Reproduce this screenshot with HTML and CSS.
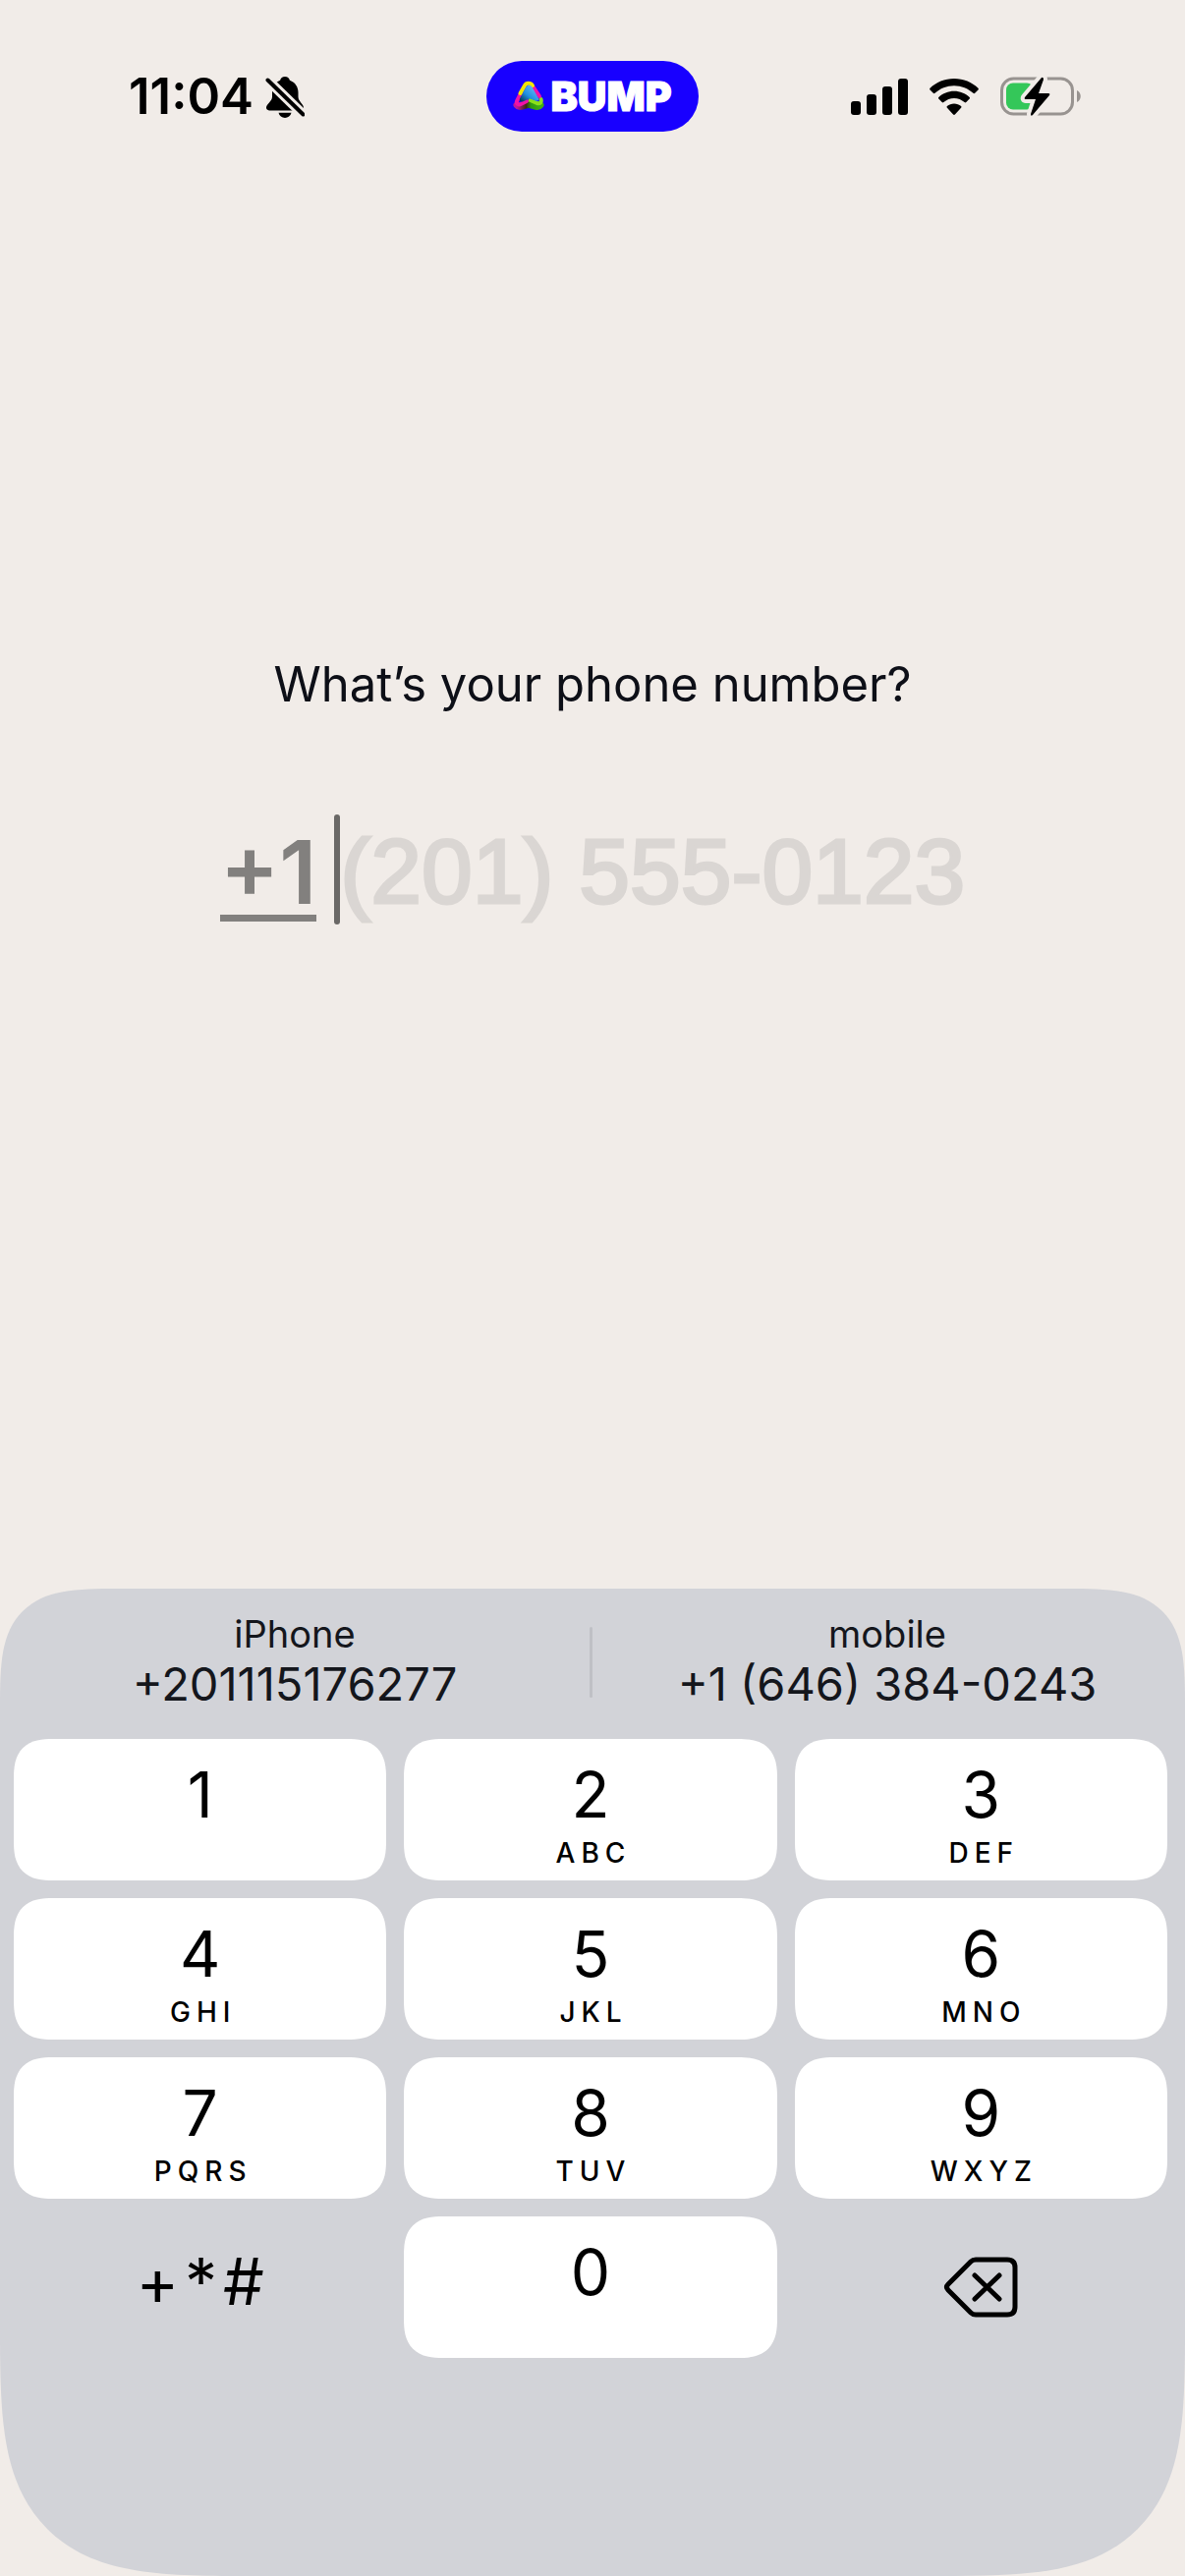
FILE: index.html
```html
<!DOCTYPE html>
<html lang="en">
<head>
<meta charset="utf-8">
<meta name="viewport" content="width=device-width, initial-scale=1">
<title>Bump – phone number</title>
<link rel="stylesheet" href="styles.css">
</head>
<body>
<div class="screen">
  <header class="status">
    <div class="status-left">
      <time class="clock">11:04</time>
      <svg class="bell" viewBox="0 0 40 44" width="40" height="44" aria-label="Silent mode">
        <path d="M20 2c-2.600 0-4.400 1.600-4.900 3.800-5.600 2-8.100 7-8.100 12.200v4.500c0 4.500-6 7.600-6 11.100 0 1.800 1.200 2.800 3 2.800h32c1.800 0 3-1 3-2.800 0-3.500-5.500-6.600-5.500-11.100V18c0-5.200-3-10.200-8.600-12.200C24.400 3.600 22.600 2 20 2z"/>
        <path d="M13.500 38.800h13c-.8 3.200-3.400 5.200-6.500 5.200s-5.700-2-6.500-5.200z"/>
        <path class="bell-gap" d="M-1 2l42 41"/>
        <path class="bell-slash" d="M2.500 5.500l36 35"/>
      </svg>
    </div>
    <div class="island">
      <svg class="logo" viewBox="0 0 32 32" width="32" height="32" aria-hidden="true">
        <defs>
          <linearGradient id="core" x1="0" y1="1" x2="1" y2="0">
            <stop offset="0" stop-color="#06263f"/><stop offset=".4" stop-color="#1f8fe0"/><stop offset="1" stop-color="#7fc4ff"/>
          </linearGradient>
          <linearGradient id="foot" x1="0" y1="0" x2="1" y2="0">
            <stop offset="0" stop-color="#c0189a"/><stop offset=".4" stop-color="#3a2a10"/><stop offset=".6" stop-color="#2f9a10"/><stop offset="1" stop-color="#3fae12"/>
          </linearGradient>
        </defs>
        <path class="logo-foot" d="M4 25c3 4 7-.5 12-.5s9 4.500 12 .5"/>
        <path class="logo-green" d="M28.500 19c1 3-1 5-4 4l-7-3"/>
        <path class="logo-magenta" d="M8 13L4 21c-1 2.500 2 4 4 3l6-3M21 7l6 9"/>
        <path class="logo-yellow" d="M7.500 13L12 5c1.500-3 6-3 8 0"/>
        <path fill="url(#core)" d="M13.500 6.500c1.500-2.500 4.500-2.500 6 0l6.500 11.500c.8 2-1 3.200-3 2.400l-6-2.200-6.500 3c-2.500 1-4.500-.7-3.500-3z"/>
      </svg>
      <span class="brand">BUMP</span>
    </div>
    <div class="status-right">
      <svg viewBox="0 0 58 38" width="58" height="38" aria-label="Signal">
        <rect x="0" y="24" width="10" height="14" rx="3"/><rect x="16" y="17" width="10" height="21" rx="3"/>
        <rect x="32" y="9" width="10" height="29" rx="3"/><rect x="48" y="1" width="10" height="37" rx="3"/>
      </svg>
      <svg viewBox="0 0 50 38" width="50" height="38" aria-label="Wi-Fi">
        <path d="M25 1C15.500 1 6.800 4.700.5 10.700c-.5.500-.5 1.200 0 1.700l3.300 3.400c.5.500 1.200.5 1.700 0C10.700 11 17.500 8.200 25 8.200S39.300 11 44.500 15.800c.5.500 1.200.5 1.700 0l3.300-3.400c.5-.5.500-1.200 0-1.700C43.200 4.700 34.500 1 25 1z"/>
        <path d="M25 13.800c-6 0-11.500 2.300-15.700 6.100-.5.500-.5 1.200 0 1.700l3.400 3.500c.5.500 1.100.5 1.700 0C17.300 22.600 21 21 25 21s7.700 1.600 10.600 4.100c.6.500 1.200.5 1.700 0l3.400-3.500c.5-.5.500-1.200 0-1.700-4.200-3.800-9.700-6.100-15.700-6.100z"/>
        <path d="M25 26.500c-2.700 0-5.200 1-7.100 2.600-.5.500-.5 1.200 0 1.700l6.200 6.700c.5.500 1.300.5 1.800 0l6.200-6.700c.5-.5.500-1.200 0-1.700-1.900-1.600-4.400-2.600-7.100-2.600z"/>
      </svg>
      <svg viewBox="0 0 82 42" width="82" height="42" aria-label="Battery charging">
        <rect class="cell" x="1.500" y="3" width="72" height="36" rx="12"/>
        <path class="nub" d="M78 15c5 2 5 10 0 12z"/>
        <rect class="charge" x="6" y="7.500" width="28" height="27" rx="7"/>
        <path class="bolt-gap" d="M42 2L25 22q-1 2 1 2h10l-5 15q0 3 2 1l17-20q1-2-1-2H39l5-14q0-3-2-2z"/>
        <path d="M42 2L25 22q-1 2 1 2h10l-5 15q0 3 2 1l17-20q1-2-1-2H39l5-14q0-3-2-2z"/>
      </svg>
    </div>
  </header>

  <main class="form">
    <label class="question" for="phone">What’s your phone number?</label>
    <div class="entry">
      <button class="code" type="button" aria-label="Country code +1">+1</button>
      <div class="field">
        <span class="caret"></span>
        <input class="phone" id="phone" type="tel" placeholder="(201) 555-0123">
      </div>
    </div>
  </main>

  <section class="keyboard" aria-label="Keypad">
    <div class="suggestions">
      <button class="suggestion" type="button"><span class="kind">iPhone</span><span class="number">+201115176277</span></button>
      <span class="divider"></span>
      <button class="suggestion" type="button"><span class="kind">mobile</span><span class="number">+1 (646) 384-0243</span></button>
    </div>
    <div class="keys">
      <button class="key" type="button"><span class="digit">1</span></button>
      <button class="key" type="button"><span class="digit">2</span><span class="letters">ABC</span></button>
      <button class="key" type="button"><span class="digit">3</span><span class="letters">DEF</span></button>
      <button class="key" type="button"><span class="digit">4</span><span class="letters">GHI</span></button>
      <button class="key" type="button"><span class="digit">5</span><span class="letters">JKL</span></button>
      <button class="key" type="button"><span class="digit">6</span><span class="letters">MNO</span></button>
      <button class="key" type="button"><span class="digit">7</span><span class="letters">PQRS</span></button>
      <button class="key" type="button"><span class="digit">8</span><span class="letters">TUV</span></button>
      <button class="key" type="button"><span class="digit">9</span><span class="letters">WXYZ</span></button>
      <button class="key key-plain" type="button"><span class="symbols">+*#</span></button>
      <button class="key" type="button"><span class="digit">0</span></button>
      <button class="key key-plain" type="button" aria-label="Delete">
        <svg class="delete" viewBox="0 0 76 62" width="76" height="62">
          <path d="M33 3h32q8 0 8 8v40q0 8-8 8H33q-3 0-5-2L5 34q-3-3 0-6L28 5q2-2 5-2z"/>
          <path d="M32 19l25 24M57 19L32 43"/>
        </svg>
      </button>
    </div>
  </section>
</div>
</body>
</html>
```
FILE: styles.css
```css
* { box-sizing: border-box; }
body {
  margin: 0;
  background: #f1ece8;
  color: #000;
  font-family: Inter, "Liberation Sans", sans-serif;
}
button {
  margin: 0;
  padding: 0;
  border: 0;
  background: none;
  color: inherit;
  font: inherit;
}
svg { display: block; flex: none; }

.screen {
  display: flex;
  flex-direction: column;
  min-height: 100vh;
}

.status {
  display: grid;
  grid-template-columns: 1fr auto 1fr;
  align-items: center;
  padding: 62px 106px 0 131px;
}
.status-left, .status-right {
  display: flex;
  align-items: center;
}
.status-left { gap: 12px; }
.status-right { justify-content: flex-end; gap: 22px; }
.clock {
  font-size: 51px;
  line-height: 60px;
  font-weight: 600;
}
.bell-gap { stroke: #f1ece8; stroke-width: 10; }
.bell-slash { stroke: #000; stroke-width: 4; stroke-linecap: round; }
.island {
  display: flex;
  align-items: center;
  justify-content: center;
  gap: 6px;
  width: 216px;
  height: 72px;
  margin-left: -25px;
  border-radius: 36px;
  background: #1800ff;
}
.brand {
  color: #fff;
  font-size: 41px;
  line-height: 48px;
  font-weight: 900;
  -webkit-text-stroke: 1px #fff;
}
.logo path { stroke-linecap: round; stroke-linejoin: round; }
.logo-foot { fill: none; stroke: url(#foot); stroke-width: 7; }
.logo-magenta { fill: none; stroke: #f012a8; stroke-width: 4; }
.logo-yellow { fill: none; stroke: #f2e600; stroke-width: 4; }
.logo-green { fill: none; stroke: #8be01a; stroke-width: 4; }
.cell { fill: none; stroke: #989390; stroke-width: 3; }
.nub { fill: #989390; }
.charge { fill: #34c759; }
.bolt-gap { fill: #f1ece8; stroke: #f1ece8; stroke-width: 8; stroke-linejoin: round; }

.form {
  display: flex;
  flex: 1;
  flex-direction: column;
  align-items: center;
  gap: 102px;
  padding-top: 533px;
}
.question {
  color: #0d0f17;
  font-size: 49px;
  line-height: 60px;
}
.entry {
  display: flex;
  align-items: flex-start;
  gap: 18px;
}
.code {
  height: 109px;
  border-bottom: 7px solid #82807e;
  color: #82807e;
  font-size: 90px;
  font-weight: 600;
  line-height: 118px;
}
.field { display: flex; }
.caret {
  width: 6px;
  height: 112px;
  border-radius: 3px;
  background: #6a6866;
}
.phone {
  field-sizing: content;
  height: 116px;
  padding: 0;
  border: 0;
  outline: 0;
  background: none;
  color: #0d0f17;
  font-family: "Liberation Sans", Arial, sans-serif;
  font-size: 93px;
  line-height: 116px;
}
.phone::placeholder {
  color: #dad6d3;
  opacity: 1;
  -webkit-text-stroke: 3px #dad6d3;
}

.keyboard {
  padding-bottom: 222px;
  border-radius: 80px 80px 166px 166px;
  background: #d2d3d8;
}
.suggestions {
  display: grid;
  grid-template-columns: 1fr 3px 1fr;
  align-items: center;
  height: 153px;
  padding: 0 3px 3px 0;
}
.suggestion {
  display: flex;
  flex-direction: column;
  align-items: center;
  padding-bottom: 5px;
  color: #14161c;
}
.kind { font-size: 38px; line-height: 48px; }
.number { font-size: 47px; line-height: 54px; }
.divider {
  height: 72px;
  border-radius: 2px;
  background: #bfc0c5;
}
.keys {
  display: grid;
  grid-template-columns: repeat(3, 1fr);
  gap: 18px;
  padding: 0 18px 0 14px;
}
.key {
  display: flex;
  flex-direction: column;
  align-items: center;
  height: 144px;
  padding-top: 20px;
  border-radius: 32px;
  background: #fff;
}
.key-plain {
  justify-content: center;
  padding-top: 0;
  background: none;
}
.digit { font-size: 64px; line-height: 74px; }
.letters {
  padding-left: 6px;
  font-size: 28px;
  line-height: 44px;
  font-weight: 500;
  letter-spacing: 6px;
}
.symbols {
  padding: 0 0 12px 6px;
  font-size: 66px;
  line-height: 74px;
  letter-spacing: 6px;
}
.delete path {
  fill: none;
  stroke: #000;
  stroke-width: 5;
  stroke-linecap: round;
  stroke-linejoin: round;
}

/* Continuous-curvature corners where the browser can draw them */
@supports (corner-shape: superellipse(2)) {
  .keyboard {
    border-radius: 120px 120px 250px 250px;
    corner-shape: superellipse(1.7);
  }
  .key {
    border-radius: 40px;
    corner-shape: superellipse(1.4);
  }
}
```
